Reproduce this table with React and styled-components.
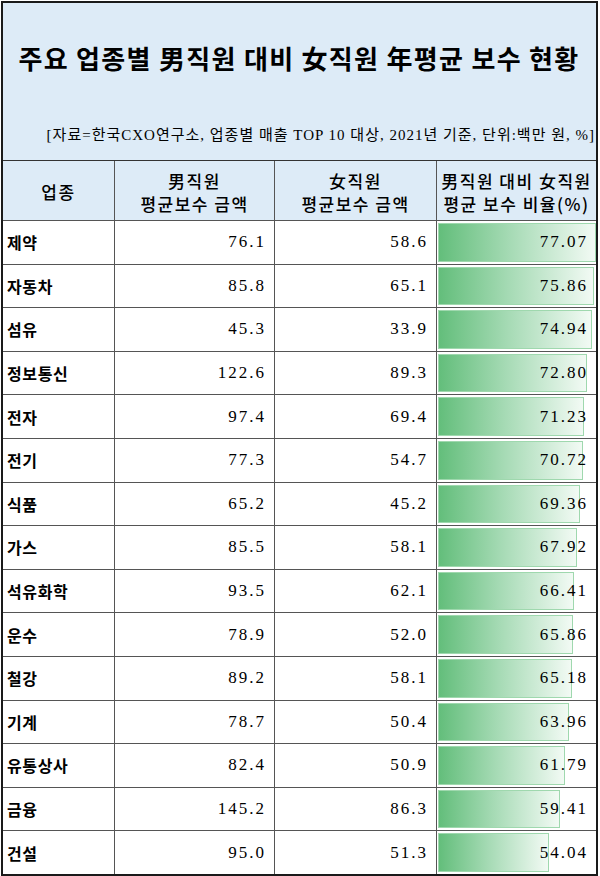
import React from 'react';
import styled, { createGlobalStyle } from 'styled-components';

const Global = createGlobalStyle`
  html, body {
    margin: 0;
    padding: 0;
    background: #ffffff;
  }
  body {
    font-family: "Liberation Serif", "Noto Sans CJK KR", serif;
    color: #000;
  }
`;

const Frame = styled.div`
  box-sizing: border-box;
  margin: 1px 0 0 1px;
  width: 597px;
  height: 875px;
  border: 2px solid #1a1a1a;
  display: flex;
  flex-direction: column;
`;

const TitleBox = styled.div`
  height: 157px;
  background: #ddebf7;
  display: flex;
  flex-direction: column;
  box-sizing: border-box;
  padding: 0 1px 0 0;
`;

const Title = styled.h1`
  margin: 0;
  padding-top: 35px;
  height: 40px;
  text-align: center;
  font-family: "Noto Sans CJK KR", sans-serif;
  font-weight: 700;
  font-size: 26px;
  letter-spacing: 1.3px;
  line-height: 40px;
`;

const Source = styled.div`
  margin-top: 47px;
  text-align: right;
  font-family: "Liberation Serif", "Noto Sans CJK KR", serif;
  font-size: 15px;
  letter-spacing: 1px;
  line-height: 20px;
`;

const Row = styled.div`
  display: grid;
  grid-template-columns: 112px 160px 162px 1fr;
  height: ${p => p.$h}px;
  box-sizing: border-box;
  border-top: 1px solid ${p => (p.$head ? '#333' : '#555')};
  background: ${p => (p.$head ? '#ddebf7' : '#fff')};
`;

const HeadCell = styled.div`
  display: flex;
  align-items: center;
  justify-content: center;
  padding-top: 2px;
  text-align: center;
  font-family: "Noto Sans CJK KR", sans-serif;
  font-weight: 500;
  font-size: 17px;
  letter-spacing: 1.5px;
  line-height: 23px;
  border-right: ${p => (p.$last ? 'none' : '1px solid #555')};
`;

const NameCell = styled.div`
  display: flex;
  align-items: center;
  padding-left: 4px;
  font-family: "Noto Sans CJK KR", sans-serif;
  font-weight: 700;
  font-size: 16px;
  letter-spacing: 0.6px;
  border-right: 1px solid #555;
`;

const NumCell = styled.div`
  display: flex;
  align-items: center;
  justify-content: flex-end;
  padding-right: 8px;
  font-family: "Liberation Serif", serif;
  font-size: 17px;
  letter-spacing: 2px;
  border-right: 1px solid #555;
`;

const BarCell = styled.div`
  display: grid;
  grid-template: 1fr / 1fr;
  align-items: center;
`;

const Bar = styled.div`
  grid-area: 1 / 1;
  align-self: stretch;
  margin: 2px 0 2px 1px;
  box-sizing: border-box;
  border: 1px solid #9fd8ae;
  background: linear-gradient(to right, #63be7b 0%, #a5dab4 45%, #f2faf4 100%);
`;

const BarValue = styled.div`
  grid-area: 1 / 1;
  position: relative;
  text-align: right;
  padding-right: 8px;
  font-family: "Liberation Serif", serif;
  font-size: 17px;
  letter-spacing: 2px;
`;

const data = [
  ['제약', '76.1', '58.6', '77.07'],
  ['자동차', '85.8', '65.1', '75.86'],
  ['섬유', '45.3', '33.9', '74.94'],
  ['정보통신', '122.6', '89.3', '72.80'],
  ['전자', '97.4', '69.4', '71.23'],
  ['전기', '77.3', '54.7', '70.72'],
  ['식품', '65.2', '45.2', '69.36'],
  ['가스', '85.5', '58.1', '67.92'],
  ['석유화학', '93.5', '62.1', '66.41'],
  ['운수', '78.9', '52.0', '65.86'],
  ['철강', '89.2', '58.1', '65.18'],
  ['기계', '78.7', '50.4', '63.96'],
  ['유통상사', '82.4', '50.9', '61.79'],
  ['금융', '145.2', '86.3', '59.41'],
  ['건설', '95.0', '51.3', '54.04'],
];

const MAX = 77.07;

export default function App() {
  return (
    <>
      <Global />
      <Frame>
        <TitleBox>
          <Title>주요 업종별 男직원 대비 女직원 年평균 보수 현황</Title>
          <Source>[자료=한국CXO연구소, 업종별 매출 TOP 10 대상, 2021년 기준, 단위:백만 원, %]</Source>
        </TitleBox>
        <Row $head $h={60}>
          <HeadCell>업종</HeadCell>
          <HeadCell>男직원<br />평균보수 금액</HeadCell>
          <HeadCell>女직원<br />평균보수 금액</HeadCell>
          <HeadCell $last>男직원 대비 女직원<br />평균 보수 비율(%)</HeadCell>
        </Row>
        {data.map(([name, m, f, r]) => (
          <Row key={name} $h={43.6}>
            <NameCell>{name}</NameCell>
            <NumCell>{m}</NumCell>
            <NumCell>{f}</NumCell>
            <BarCell>
              <Bar style={{ width: `${(parseFloat(r) / MAX) * 99.4}%` }} />
              <BarValue>{r}</BarValue>
            </BarCell>
          </Row>
        ))}
      </Frame>
    </>
  );
}
